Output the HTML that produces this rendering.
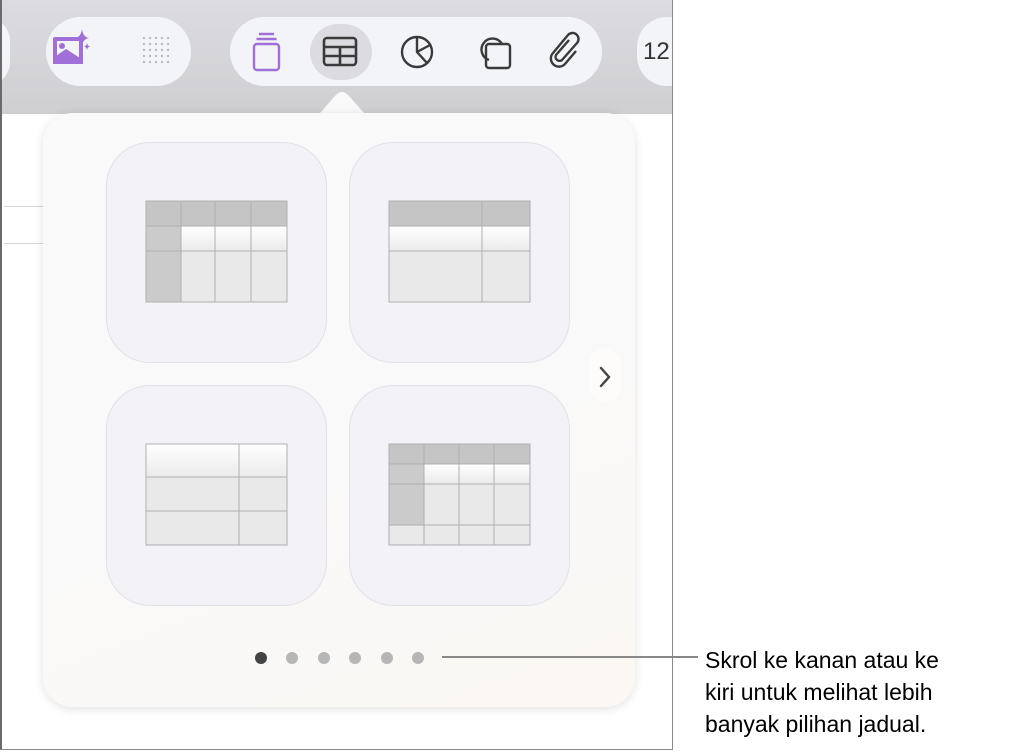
<!DOCTYPE html>
<html><head><meta charset="utf-8"><style>
body{margin:0;width:1009px;height:753px;background:#fff;position:relative;overflow:hidden;font-family:"Liberation Sans",sans-serif}
.screen{position:absolute;left:0;top:0;width:670px;height:749px;border-right:1px solid #8a8a8a;border-bottom:1px solid #8a8a8a;border-left:2px solid #6a6a6a;box-sizing:content-box;overflow:hidden;background:#fff}
.tb{position:absolute;left:0;top:0;width:100%;height:114px;background:linear-gradient(#dcdce0,#cfcfd2)}
.pill{position:absolute;top:17px;height:69px;border-radius:35px;background:#f3f4f7}
.pop{position:absolute;left:41px;top:113px;width:592px;height:594px;border-radius:30px;background:linear-gradient(160deg,#f9f9fa 50%,#fbf8f3);box-shadow:0 2px 10px rgba(0,0,0,.12)}
.tile{position:absolute;width:221px;height:221px;border-radius:44px;background:#f2f2f7;border:1px solid #e1e1e7;box-sizing:border-box}
.dot{position:absolute;top:652px;width:12px;height:12px;border-radius:50%;background:#b6b6b6}
.txt{position:absolute;left:705px;top:644px;font-size:23px;line-height:32px;color:#000}
</style></head><body>
<div class="screen">
<div class="tb"></div>
<div class="pill" style="left:-40px;width:48px"></div>
<div class="pill" style="left:44px;width:145px"></div>
<div class="pill" style="left:228px;width:372px"></div>
<div class="pill" style="left:635px;width:60px"></div>
<div style="position:absolute;left:641px;top:38px;font-size:24px;color:#333">12</div>
<div style="position:absolute;left:308px;top:24px;width:62px;height:56px;border-radius:28px;background:#dcdce0"></div>
<svg width="670" height="120" style="position:absolute;left:0;top:0">
 <rect x="51" y="37" width="30" height="27" rx="2" fill="#a070d8"/>
 <rect x="55" y="41" width="22" height="16" fill="#f3f4f7"/>
 <circle cx="60" cy="46" r="3" fill="#a070d8"/>
 <path d="M51 64 L51 58 L64 49 L81 60 L81 64Z" fill="#a070d8"/>
 <path d="M80 29 Q81 37 87 38 Q81 39 80 46 Q79 39 73 38 Q79 37 80 29Z" fill="#a070d8"/>
 <path d="M85 43 Q85.5 46 88 46.5 Q85.5 47 85 50 Q84.5 47 82 46.5 Q84.5 46 85 43Z" fill="#a070d8"/>
 <g fill="#bbb">
 <g id="r"><circle cx="142" cy="38" r="1.2"/><circle cx="148" cy="38" r="1.2"/><circle cx="154" cy="38" r="1.2"/><circle cx="160" cy="38" r="1.2"/><circle cx="166" cy="38" r="1.2"/></g>
 <use href="#r" y="6"/><use href="#r" y="12"/><use href="#r" y="18"/><use href="#r" y="24"/>
 </g>
 <g fill="none" stroke="#a070d8" stroke-width="2.4">
 <rect x="252" y="44" width="25" height="26" rx="3"/>
 <path d="M257 34h15M254.5 39h20"/>
 </g>
 <g fill="none" stroke="#3a3a3a" stroke-width="2.6">
 <rect x="322" y="38" width="32" height="27" rx="3"/>
 <path d="M322 47h32M322 56h32M338 47v18"/>
 </g>
 <g fill="none" stroke="#3a3a3a" stroke-width="2.4">
 <circle cx="415" cy="52" r="15"/>
 <path d="M415 37v15l10 11M415 52l13-7"/>
 <path d="M487 60a11 11 0 1 1 13-16"/>
 <rect x="484" y="44" width="24" height="24" rx="3"/>
 <path d="M567 40 L554 55 a4 4 0 0 0 6 5 L575 43 a6 6 0 0 0 -9 -8 L551 53 a8 8 0 0 0 12 11 L574 51"/>
 </g>
 <path d="M318 113 L333 96 Q340 88 347 96 L362 113Z" fill="#f9f9fa"/>
</svg>
<div style="position:absolute;left:2px;top:206px;width:40px;border-top:1px solid #d8d8dc"></div>
<div style="position:absolute;left:2px;top:243px;width:40px;border-top:1px solid #d8d8dc"></div>
<div class="pop"></div>
<div class="tile" style="left:104px;top:142px"></div>
<div class="tile" style="left:347px;top:142px"></div>
<div class="tile" style="left:104px;top:385px"></div>
<div class="tile" style="left:347px;top:385px"></div>
<svg width="670" height="750" style="position:absolute;left:0;top:0">
<defs><linearGradient id="w" x1="0" y1="0" x2="0" y2="1"><stop offset="0" stop-color="#fff"/><stop offset="1" stop-color="#ebebeb"/></linearGradient></defs>
<g stroke="#b0b0b0" stroke-width="1">
 <rect x="144" y="201" width="141" height="101" fill="#e9e9e9"/>
 <rect x="144" y="226" width="141" height="25" fill="url(#w)"/>
 <rect x="144" y="201" width="141" height="25" fill="#c4c5c4"/>
 <rect x="144" y="226" width="35" height="76" fill="#cbcbcb"/>
 <path d="M179 201v101M213 201v101M249 201v101M144 251h141" fill="none"/>
 <rect x="387" y="201" width="141" height="101" fill="#e9e9e9"/>
 <rect x="387" y="226" width="141" height="25" fill="url(#w)"/>
 <rect x="387" y="201" width="141" height="25" fill="#c4c5c4"/>
 <path d="M480 201v101M387 251h141" fill="none"/>
 <rect x="144" y="444" width="141" height="101" fill="#e9e9e9"/>
 <rect x="144" y="444" width="141" height="33" fill="url(#w)"/>
 <path d="M237 444v101M144 477h141M144 511h141" fill="none"/>
 <rect x="387" y="444" width="141" height="101" fill="#e9e9e9"/>
 <rect x="387" y="464" width="141" height="20" fill="url(#w)"/>
 <rect x="387" y="444" width="141" height="20" fill="#c4c5c4"/>
 <rect x="387" y="464" width="35" height="61" fill="#cbcbcb"/>
 <path d="M422 444v101M457 444v101M492 444v101M387 484h141M387 525h141" fill="none"/>
</g>
</svg>
<div style="position:absolute;left:587px;top:348px;width:32px;height:54px;border-radius:16px;background:#fdfcfa"></div>
<svg width="20" height="30" style="position:absolute;left:593px;top:362px"><path d="M6 6l8 9-8 9" fill="none" stroke="#444" stroke-width="2.4" stroke-linecap="round"/></svg>
<div class="dot" style="left:253px;background:#444"></div>
<div class="dot" style="left:284px"></div>
<div class="dot" style="left:316px"></div>
<div class="dot" style="left:347px"></div>
<div class="dot" style="left:379px"></div>
<div class="dot" style="left:410px"></div>
</div>
<div style="position:absolute;left:442px;top:656px;width:256px;height:2px;background:#888"></div>
<div class="txt">Skrol ke kanan atau ke<br>kiri untuk melihat lebih<br>banyak pilihan jadual.</div>
</body></html>
